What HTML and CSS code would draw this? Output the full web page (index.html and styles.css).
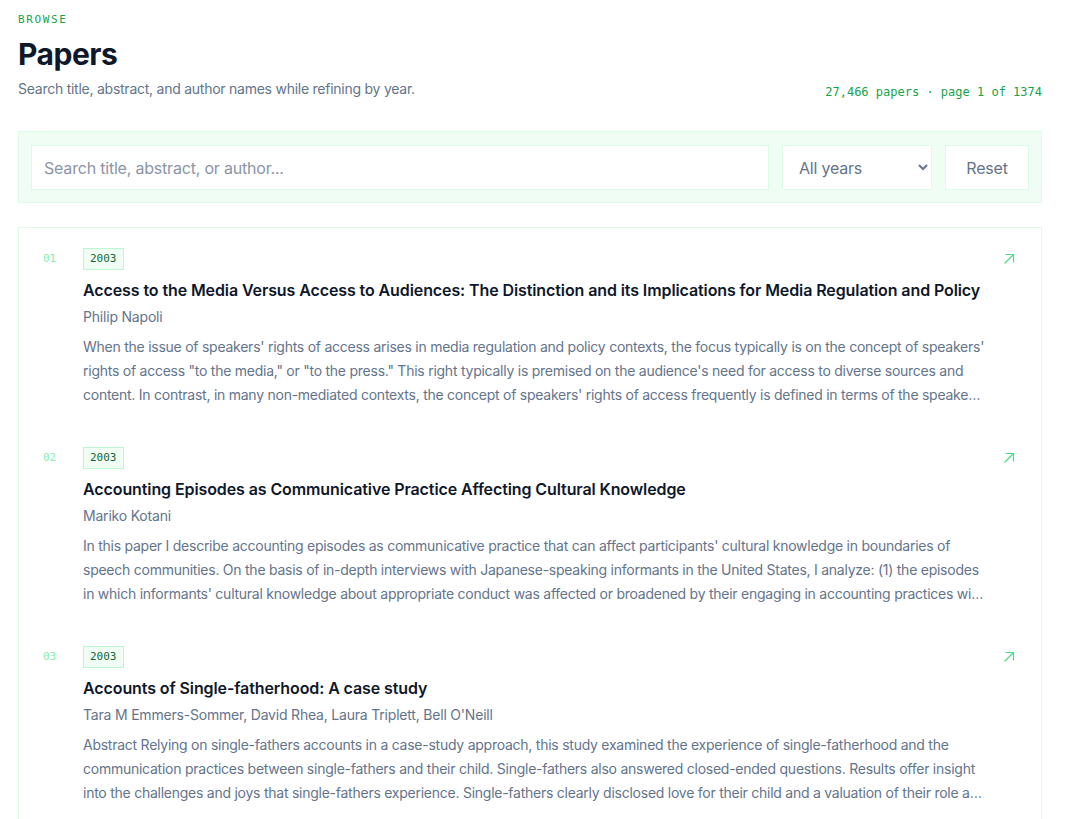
FILE: index.html
```html
<!DOCTYPE html>
<html lang="en">
<head>
    <meta charset="UTF-8">
    <meta name="viewport" content="width=device-width, initial-scale=1.0">
    <title>Papers</title>
    <link rel="stylesheet" href="styles.css">
</head>
<body>
    <main class="page">
        <header class="page-head">
            <div class="eyebrow">Browse</div>
            <h1 class="page-title">Papers</h1>
            <div class="head-row">
                <p class="lede">Search title, abstract, and author names while refining by year.</p>
                <div class="meta">27,466 papers · page 1 of 1374</div>
            </div>
        </header>

        <!-- search + filter bar -->
        <form class="filters">
            <input class="field search" type="text" placeholder="Search title, abstract, or author...">
            <select class="field year-select">
                <option>All years</option>
                <option>2003</option>
                <option>2004</option>
            </select>
            <button class="field reset" type="reset">Reset</button>
        </form>

        <ol class="paper-list">
            <li class="paper">
                <span class="num">01</span>
                <div class="paper-body">
                    <span class="year-tag">2003</span>
                    <h2 class="paper-title">Access to the Media Versus Access to Audiences: The Distinction and its Implications for Media Regulation and Policy</h2>
                    <div class="authors">Philip Napoli</div>
                    <p class="abstract">When the issue of speakers' rights of access arises in media regulation and policy contexts, the focus typically is on the concept of speakers' rights of access "to the media," or "to the press." This right typically is premised on the audience's need for access to diverse sources and content. In contrast, in many non-mediated contexts, the concept of speakers' rights of access frequently is defined in terms of the speaker's right of access to audiences, and the conditions under which such access may be restricted.</p>
                </div>
                <a class="open" href="#"><svg width="12" height="12" viewBox="0 0 12 12"><path d="M1.5 10.5L10.5 1.5M2.5 1.5h8v8" fill="none" stroke="currentColor" stroke-width="1.2"/></svg></a>
            </li>
            <li class="paper">
                <span class="num">02</span>
                <div class="paper-body">
                    <span class="year-tag">2003</span>
                    <h2 class="paper-title">Accounting Episodes as Communicative Practice Affecting Cultural Knowledge</h2>
                    <div class="authors">Mariko Kotani</div>
                    <p class="abstract">In this paper I describe accounting episodes as communicative practice that can affect participants' cultural knowledge in boundaries of speech communities. On the basis of in-depth interviews with Japanese-speaking informants in the United States, I analyze: (1) the episodes in which informants' cultural knowledge about appropriate conduct was affected or broadened by their engaging in accounting practices with others, and (2) the ways in which they made sense of those episodes.</p>
                </div>
                <a class="open" href="#"><svg width="12" height="12" viewBox="0 0 12 12"><path d="M1.5 10.5L10.5 1.5M2.5 1.5h8v8" fill="none" stroke="currentColor" stroke-width="1.2"/></svg></a>
            </li>
            <li class="paper">
                <span class="num">03</span>
                <div class="paper-body">
                    <span class="year-tag">2003</span>
                    <h2 class="paper-title">Accounts of Single-fatherhood: A case study</h2>
                    <div class="authors">Tara M Emmers-Sommer, David Rhea, Laura Triplett, Bell O'Neill</div>
                    <p class="abstract">Abstract Relying on single-fathers accounts in a case-study approach, this study examined the experience of single-fatherhood and the communication practices between single-fathers and their child. Single-fathers also answered closed-ended questions. Results offer insight into the challenges and joys that single-fathers experience. Single-fathers clearly disclosed love for their child and a valuation of their role as a father, as well as the stresses of the role.</p>
                </div>
                <a class="open" href="#"><svg width="12" height="12" viewBox="0 0 12 12"><path d="M1.5 10.5L10.5 1.5M2.5 1.5h8v8" fill="none" stroke="currentColor" stroke-width="1.2"/></svg></a>
            </li>
        </ol>
    </main>
</body>
</html>
```

FILE: styles.css
```css
* {
    box-sizing: border-box;
}
body {
    margin: 0;
    font-family: Inter, "Noto Sans", sans-serif;
    color: #0f172a;
    background: #fff;
}
.page {
    width: 1060px;
    padding: 13px 18px 0;
}
.eyebrow {
    font-family: "DejaVu Sans Mono", monospace;
    font-size: 11px;
    line-height: 14px;
    letter-spacing: 1.65px;
    text-transform: uppercase;
    color: #16a34a;
}
.page-title {
    margin: 9px 0 0;
    font-size: 30px;
    font-weight: 700;
    letter-spacing: -0.5px;
    line-height: 36px;
}
.head-row {
    display: flex;
    justify-content: space-between;
    align-items: baseline;
    margin-top: 7px;
}
.lede {
    margin: 0;
    font-size: 14px;
    line-height: 20px;
    letter-spacing: -0.25px;
    color: #64748b;
}
.meta {
    font-family: "DejaVu Sans Mono", monospace;
    font-size: 12px;
    color: #16a34a;
    line-height: 16px;
    position: relative;
    top: 2px;
}
.filters {
    display: flex;
    gap: 13px;
    margin-top: 32px;
    padding: 13px 12px 12px;
    background: #f0fdf4;
    border: 1px solid #dcfce7;
}
.field {
    height: 45px;
    border: 1px solid #dcfce7;
    background: #fff;
    font-family: Inter, sans-serif;
    font-size: 16px;
    letter-spacing: -0.2px;
    color: #64748b;
    padding: 0 12px;
    border-radius: 0;
}
.search {
    flex: 1;
}
.search::placeholder {
    color: #8b95a5;
}
.year-select {
    width: 150px;
    outline: none;
}
.reset {
    width: 84px;
    text-align: center;
    cursor: pointer;
}
.paper-list {
    list-style: none;
    margin: 24px 0 0;
    padding: 0;
    border: 1px solid #dcfce7;
}
.paper {
    display: grid;
    grid-template-columns: 40px 1fr 30px;
    padding: 20px 26px 20px 24px;
}
.num {
    font-family: "DejaVu Sans Mono", monospace;
    font-size: 11px;
    line-height: 22px;
    color: #86efac;
}
.paper-body {
    min-width: 0;
}
.year-tag {
    display: block;
    width: max-content;
    font-family: "DejaVu Sans Mono", monospace;
    font-size: 11px;
    line-height: 20px;
    padding: 0 6px;
    color: #166534;
    background: #f0fdf4;
    border: 1px solid #bbf7d0;
}
.paper-title {
    margin: 8px 0 0;
    font-size: 16px;
    font-weight: 600;
    line-height: 24px;
    letter-spacing: -0.1px;
}
.authors {
    margin-top: 5px;
    font-size: 14px;
    line-height: 20px;
    letter-spacing: -0.2px;
    color: #64748b;
}
.abstract {
    margin: 8px 0 0;
    font-size: 14px;
    line-height: 24px;
    letter-spacing: -0.25px;
    color: #64748b;
    display: -webkit-box;
    -webkit-line-clamp: 3;
    -webkit-box-orient: vertical;
    overflow: hidden;
}
.open {
    justify-self: end;
    color: #4ade80;
    padding-top: 5px;
    line-height: 0;
}
```
